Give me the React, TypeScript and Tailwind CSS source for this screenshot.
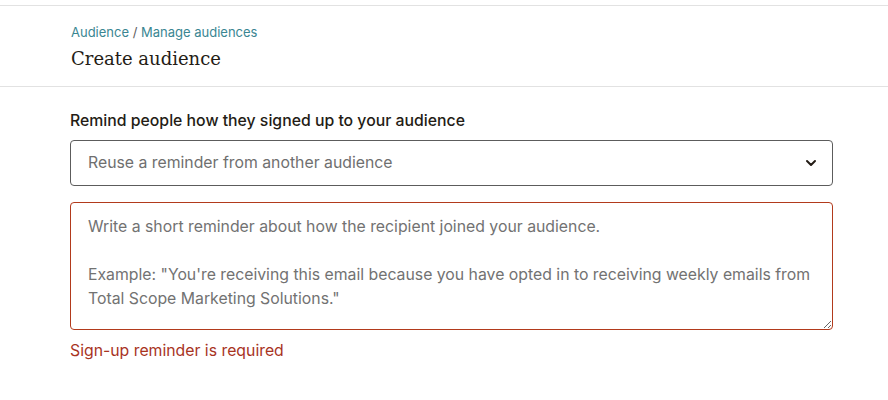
import { ChevronDown } from "lucide-react";

const sans = { fontFamily: "Inter, 'Open Sans', sans-serif" };

const App = () => {
  return (
    <div className="min-h-[400px] w-[888px] bg-white text-[#241c15]" style={sans}>
      <div className="h-[5px]" />
      <header className="border-y border-[#e2e2e2] px-[71px] pt-[18px] pb-[14px]">
        <nav className="text-[13px] leading-[16px] text-[#3a8692]">
          <span>Audience</span>
          <span className="text-[#5d5d5d]"> / </span>
          <span>Manage audiences</span>
        </nav>
        <h1 className="mt-[6px] text-[18px] leading-[26px] font-['DejaVu_Serif',serif] text-[#241c15]">
          Create audience
        </h1>
      </header>

      <main className="px-[70px] pt-[24px] pr-[55px]">
        <label className="block text-[15.8px] leading-[20px] font-medium text-[#241c15]">
          Remind people how they signed up to your audience
        </label>

        <div className="mt-[9px] flex h-[46px] items-center justify-between rounded border border-[#5c5c5c] pl-[17px] pr-[13px]">
          <span className="text-[15.8px] text-[#6f6f6f]">Reuse a reminder from another audience</span>
          <ChevronDown className="h-[16px] w-[16px] text-[#241c15]" strokeWidth={3} />
        </div>

        <textarea
          readOnly
          className="mt-[16px] block h-[128px] w-full resize-y rounded border border-[#b23a1c] px-[17px] py-[12px] text-[15.8px] leading-[24px] text-[#6f6f6f] placeholder:text-[#727272] outline-none"
          style={sans}
          placeholder={
            'Write a short reminder about how the recipient joined your audience.\n\nExample: "You\'re receiving this email because you have opted in to receiving weekly emails from Total Scope Marketing Solutions."'
          }
        />

        <p className="mt-[11px] text-[15.8px] leading-[20px] text-[#a8341f]">Sign-up reminder is required</p>
      </main>
    </div>
  );
};

export default App;
